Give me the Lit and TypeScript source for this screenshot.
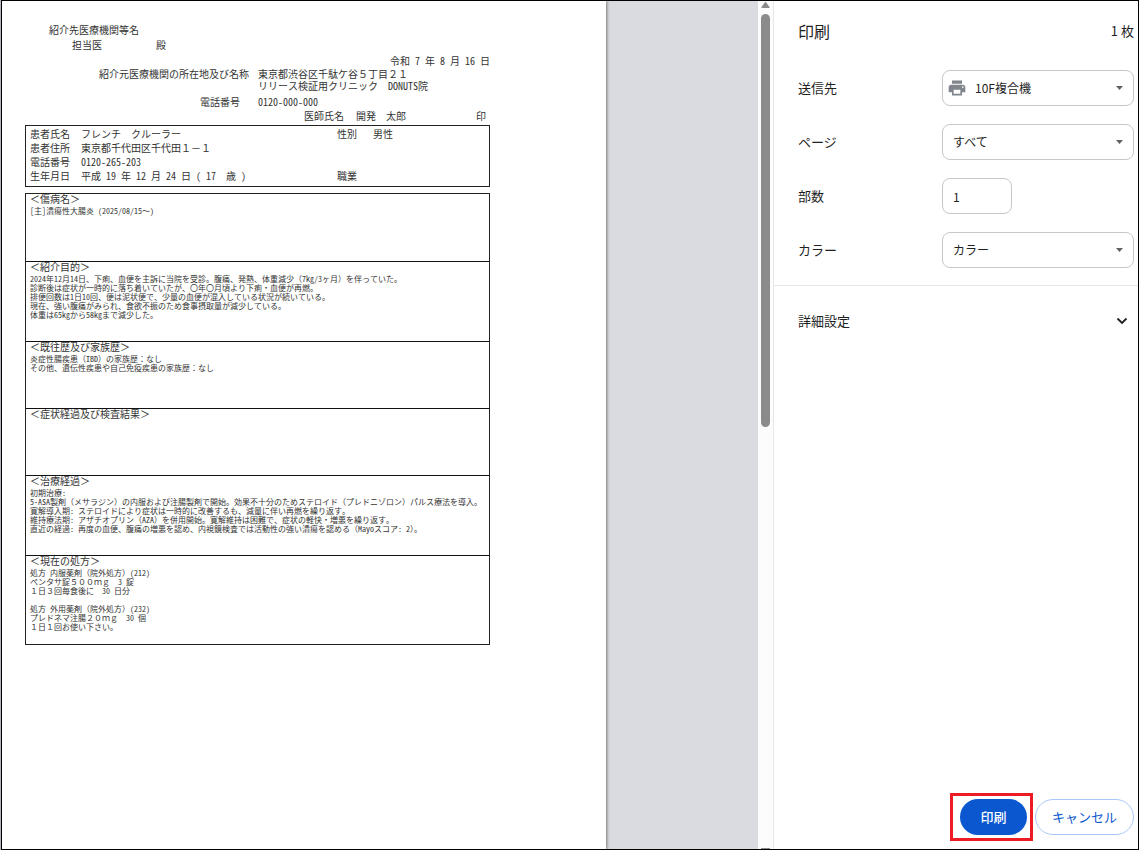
import { LitElement, html, css, nothing } from "lit";
import { customElement, property } from "lit/decorators.js";

interface Section {
  title: string;
  lines: string[];
  size: "short" | "medium" | "tall";
}

const SECTIONS: Section[] = [
  { title: "＜傷病名＞", size: "short", lines: ["[主]潰瘍性大腸炎 (2025/08/15～)"] },
  {
    title: "＜紹介目的＞",
    size: "medium",
    lines: [
      "2024年12月14日、下痢、血便を主訴に当院を受診。腹痛、発熱、体重減少（7kg/3ヶ月）を伴っていた。",
      "診断後は症状が一時的に落ち着いていたが、〇年〇月頃より下痢・血便が再燃。",
      "排便回数は1日10回、便は泥状便で、少量の血便が混入している状況が続いている。",
      "現在、強い腹痛がみられ、食欲不振のため食事摂取量が減少している。",
      "体重は65kgから58kgまで減少した。",
    ],
  },
  {
    title: "＜既往歴及び家族歴＞",
    size: "short",
    lines: ["炎症性腸疾患（IBD）の家族歴：なし", "その他、遺伝性疾患や自己免疫疾患の家族歴：なし"],
  },
  { title: "＜症状経過及び検査結果＞", size: "short", lines: [] },
  {
    title: "＜治療経過＞",
    size: "medium",
    lines: [
      "初期治療:",
      "5-ASA製剤（メサラジン）の内服および注腸製剤で開始。効果不十分のためステロイド（プレドニゾロン）パルス療法を導入。",
      "寛解導入期: ステロイドにより症状は一時的に改善するも、減量に伴い再燃を繰り返す。",
      "維持療法期: アザチオプリン（AZA）を併用開始。寛解維持は困難で、症状の軽快・増悪を繰り返す。",
      "直近の経過: 再度の血便、腹痛の増悪を認め、内視鏡検査では活動性の強い潰瘍を認める（Mayoスコア: 2）。",
    ],
  },
  {
    title: "＜現在の処方＞",
    size: "tall",
    lines: [
      "処方 内服薬剤（院外処方）(212)",
      "ペンタサ錠５００ｍｇ　3 錠",
      "１日３回毎食後に　30 日分",
      "",
      "処方 外用薬剤（院外処方）(232)",
      "プレドネマ注腸２０ｍｇ　30 個",
      "１日１回お使い下さい。",
    ],
  },
];

@customElement("referral-letter")
export class ReferralLetter extends LitElement {
  static styles = css`
    :host {
      display: block;
      box-sizing: border-box;
      padding: 23px 116px 23px 23px;
      color: #333;
      font-family: "Noto Sans Mono CJK JP", "Noto Sans CJK JP", monospace;
      font-size: 10px;
      line-height: 12px;
      white-space: nowrap;
    }
    .addressee { padding-left: 24px; }
    .attending { display: flex; gap: 54px; padding: 3px 0 4px 47px; }
    .date { text-align: right; }
    .origin {
      display: grid;
      grid-template-columns: 224px 1fr;
      column-gap: 9px;
      margin-top: 1px;
    }
    .origin .label { text-align: right; }
    .phone { margin-top: 4px; }
    .phone .label { padding-right: 9px; }
    .doctor {
      display: flex;
      gap: 12px;
      margin: 2px 4px 3px 0;
      padding-left: 279px;
    }
    .seal { margin-left: auto; }
    .patient {
      display: grid;
      grid-template-columns: 51px 1fr 36px 116px;
      padding: 1px 0 3px 4px;
      border: 1px solid #222;
      line-height: 14px;
    }
    .wide { grid-column: 2 / -1; }
    .sections { margin-top: 6px; border: 1px solid #222; }
    .section { box-sizing: border-box; padding-left: 4px; }
    .section + .section { border-top: 1px solid #111; }
    .short { min-height: 67px; }
    .medium { min-height: 80px; }
    .tall { min-height: 89px; }
    .title { margin: 0 0 2px; font-size: inherit; font-weight: 400; line-height: 10px; }
    .line { min-height: 9px; font-size: 8px; line-height: 9px; }
  `;

  render() {
    return html`
      <div class="addressee">紹介先医療機関等名</div>
      <div class="attending"><span>担当医</span><span>殿</span></div>
      <div class="date">令和 7 年 8 月 16 日</div>
      <div class="origin"><span class="label">紹介元医療機関の所在地及び名称</span><span>東京都渋谷区千駄ケ谷５丁目２１<br>リリース検証用クリニック　DONUTS院</span></div>
      <div class="origin phone"><span class="label">電話番号</span><span>0120-000-000</span></div>
      <div class="doctor"><span>医師氏名</span><span>開発　太郎</span><span class="seal">印</span></div>
      <div class="patient">
        <span>患者氏名</span><span>フレンチ　クルーラー</span><span>性別</span><span>男性</span>
        <span>患者住所</span><span class="wide">東京都千代田区千代田１－１</span>
        <span>電話番号</span><span class="wide">0120-265-203</span>
        <span>生年月日</span><span>平成 19 年 12 月 24 日 ( 17　歳 )</span><span>職業</span>
      </div>
      <div class="sections">
        ${SECTIONS.map(
          (s) => html`<section class="section ${s.size}"><h2 class="title">${s.title}</h2>${s.lines.map(
            (l) => html`<div class="line">${l}</div>`
          )}</section>`
        )}
      </div>
    `;
  }
}

@customElement("select-field")
export class SelectField extends LitElement {
  @property() label = "";
  @property() value = "";
  @property({ type: Boolean }) printer = false;

  static styles = css`
    :host { display: block; }
    .row { display: flex; align-items: center; justify-content: space-between; }
    .box { display: grid; width: 192px; align-items: center; }
    .select, .icon, .arrow { grid-area: 1 / 1; }
    .select {
      appearance: none;
      box-sizing: border-box;
      width: 100%;
      height: 36px;
      padding: 0 24px 0 10px;
      border: 1px solid #c7c7c7;
      border-radius: 8px;
      background: #fff;
      color: #1f1f1f;
      font: inherit;
      font-size: 12px;
    }
    .with-icon { padding-left: 32px; }
    .icon, .arrow { pointer-events: none; z-index: 1; }
    .icon { margin-left: 5px; }
    .arrow { justify-self: end; margin-right: 11px; }
  `;

  render() {
    return html`<div class="row">
      <label for="field">${this.label}</label>
      <div class="box">
        <select id="field" class="select ${this.printer ? "with-icon" : ""}"><option>${this.value}</option></select>
        ${this.printer
          ? html`<svg class="icon" width="20" height="20" viewBox="0 0 24 24" fill="#80868b" aria-hidden="true">
              <path d="M19 8H5c-1.660 0-3 1.340-3 3v6h4v4h12v-4h4v-6c0-1.660-1.340-3-3-3zm-3 11H8v-5h8v5zm3-7c-.55 0-1-.45-1-1s.45-1 1-1 1 .45 1 1-.45 1-1 1zm-1-9H6v4h12V3z"/>
            </svg>`
          : nothing}
        <svg class="arrow" width="7" height="4" viewBox="0 0 7 4" fill="#5f6368" aria-hidden="true"><path d="M0 0h7L3.500 4z"/></svg>
      </div>
    </div>`;
  }
}

@customElement("app-root")
export class AppRoot extends LitElement {
  static styles = css`
    :host {
      display: block;
      box-sizing: border-box;
      height: 100vh;
      padding: 0 2px 0 1px;
      background: linear-gradient(90deg, #b4b6bd 1px, #fff 1px);
      color: #1f1f1f;
      font-family: "Noto Sans CJK JP", sans-serif;
      font-size: 13px;
      line-height: 20px;
    }
    .frame {
      display: flex;
      box-sizing: border-box;
      height: 100%;
      border: 1px solid #000;
      background: #fff;
    }
    .preview { display: flex; flex: 1; min-width: 0; overflow: hidden; background: #dadbe0; }
    .paper {
      flex: 0 1 604px;
      box-sizing: border-box;
      background: #fff;
      box-shadow: 1px 0 3px #777;
    }
    .scrollbar {
      display: flex;
      flex: none;
      flex-direction: column;
      align-items: center;
      gap: 5px;
      width: 15px;
      background: #fcfcfc;
    }
    .track { flex: 1; width: 9px; }
    .thumb { height: 49.8%; border-radius: 5px; background: #8b8b8b; }
    .end { width: 9px; height: 1px; background: #8b8b8b; }
    .panel {
      display: flex;
      flex: none;
      flex-direction: column;
      box-sizing: border-box;
      width: 365px;
      border-left: 1px solid #e8e8e8;
    }
    .header {
      display: flex;
      align-items: center;
      justify-content: space-between;
      padding: 18px 4px 0 24px;
      line-height: 24px;
    }
    .heading { margin: 0; font-size: 16px; font-weight: 400; }
    .fields {
      display: flex;
      flex-direction: column;
      gap: 18px;
      padding: 27px 4px 17px 24px;
      border-bottom: 1px solid #e8e8e8;
    }
    .copies { display: flex; align-items: center; }
    .copies-label { flex: 1; }
    .number {
      box-sizing: border-box;
      width: 70px;
      height: 36px;
      margin-right: 122px;
      padding: 0 10px;
      border: 1px solid #c7c7c7;
      border-radius: 8px;
      color: #1f1f1f;
      font: inherit;
      font-size: 12px;
    }
    .more {
      display: flex;
      align-items: center;
      justify-content: space-between;
      padding: 25px 10px 25px 24px;
      border: 0;
      background: none;
      color: inherit;
      font: inherit;
    }
    .actions {
      display: flex;
      align-items: center;
      justify-content: flex-end;
      gap: 2px;
      margin-top: auto;
      padding: 0 4px 8px 0;
    }
    .highlight { padding: 3px 3px 3px 7px; border: 3px solid #ed1c24; }
    .button {
      display: block;
      box-sizing: border-box;
      height: 36px;
      padding: 0 16px;
      border: 1px solid #a8c7fa;
      border-radius: 18px;
      background: #fff;
      color: #0b57d0;
      font: inherit;
    }
    .primary { min-width: 67px; border-width: 0; background: #0b57d0; color: #fff; font-weight: 500; }
  `;

  render() {
    return html`
      <div class="frame" lang="ja">
        <div class="preview"><referral-letter class="paper"></referral-letter></div>
        <div class="scrollbar" aria-hidden="true">
          <svg width="9" height="8" viewBox="0 0 9 8" fill="#8b8b8b"><path d="M4.500 0.500L8.500 6Q9 7 8 7H1Q0 7 .5 6z"/></svg>
          <div class="track"><div class="thumb"></div></div>
          <div class="end"></div>
        </div>
        <main class="panel">
          <header class="header"><h1 class="heading">印刷</h1><span>1 枚</span></header>
          <div class="fields">
            <select-field label="送信先" value="10F複合機" printer></select-field>
            <select-field label="ページ" value="すべて"></select-field>
            <div class="copies">
              <label class="copies-label" for="copies">部数</label>
              <input class="number" id="copies" type="text" inputmode="numeric" value="1">
            </div>
            <select-field label="カラー" value="カラー"></select-field>
          </div>
          <button class="more" type="button">
            詳細設定
            <svg width="12" height="8" viewBox="0 0 12 8" fill="none" stroke="#1f1f1f" stroke-width="1.800" aria-hidden="true"><path d="M1.500 1.500L6 6l4.500-4.500"/></svg>
          </button>
          <div class="actions">
            <div class="highlight"><button class="button primary" type="button">印刷</button></div>
            <button class="button" type="button">キャンセル</button>
          </div>
        </main>
      </div>
    `;
  }
}
